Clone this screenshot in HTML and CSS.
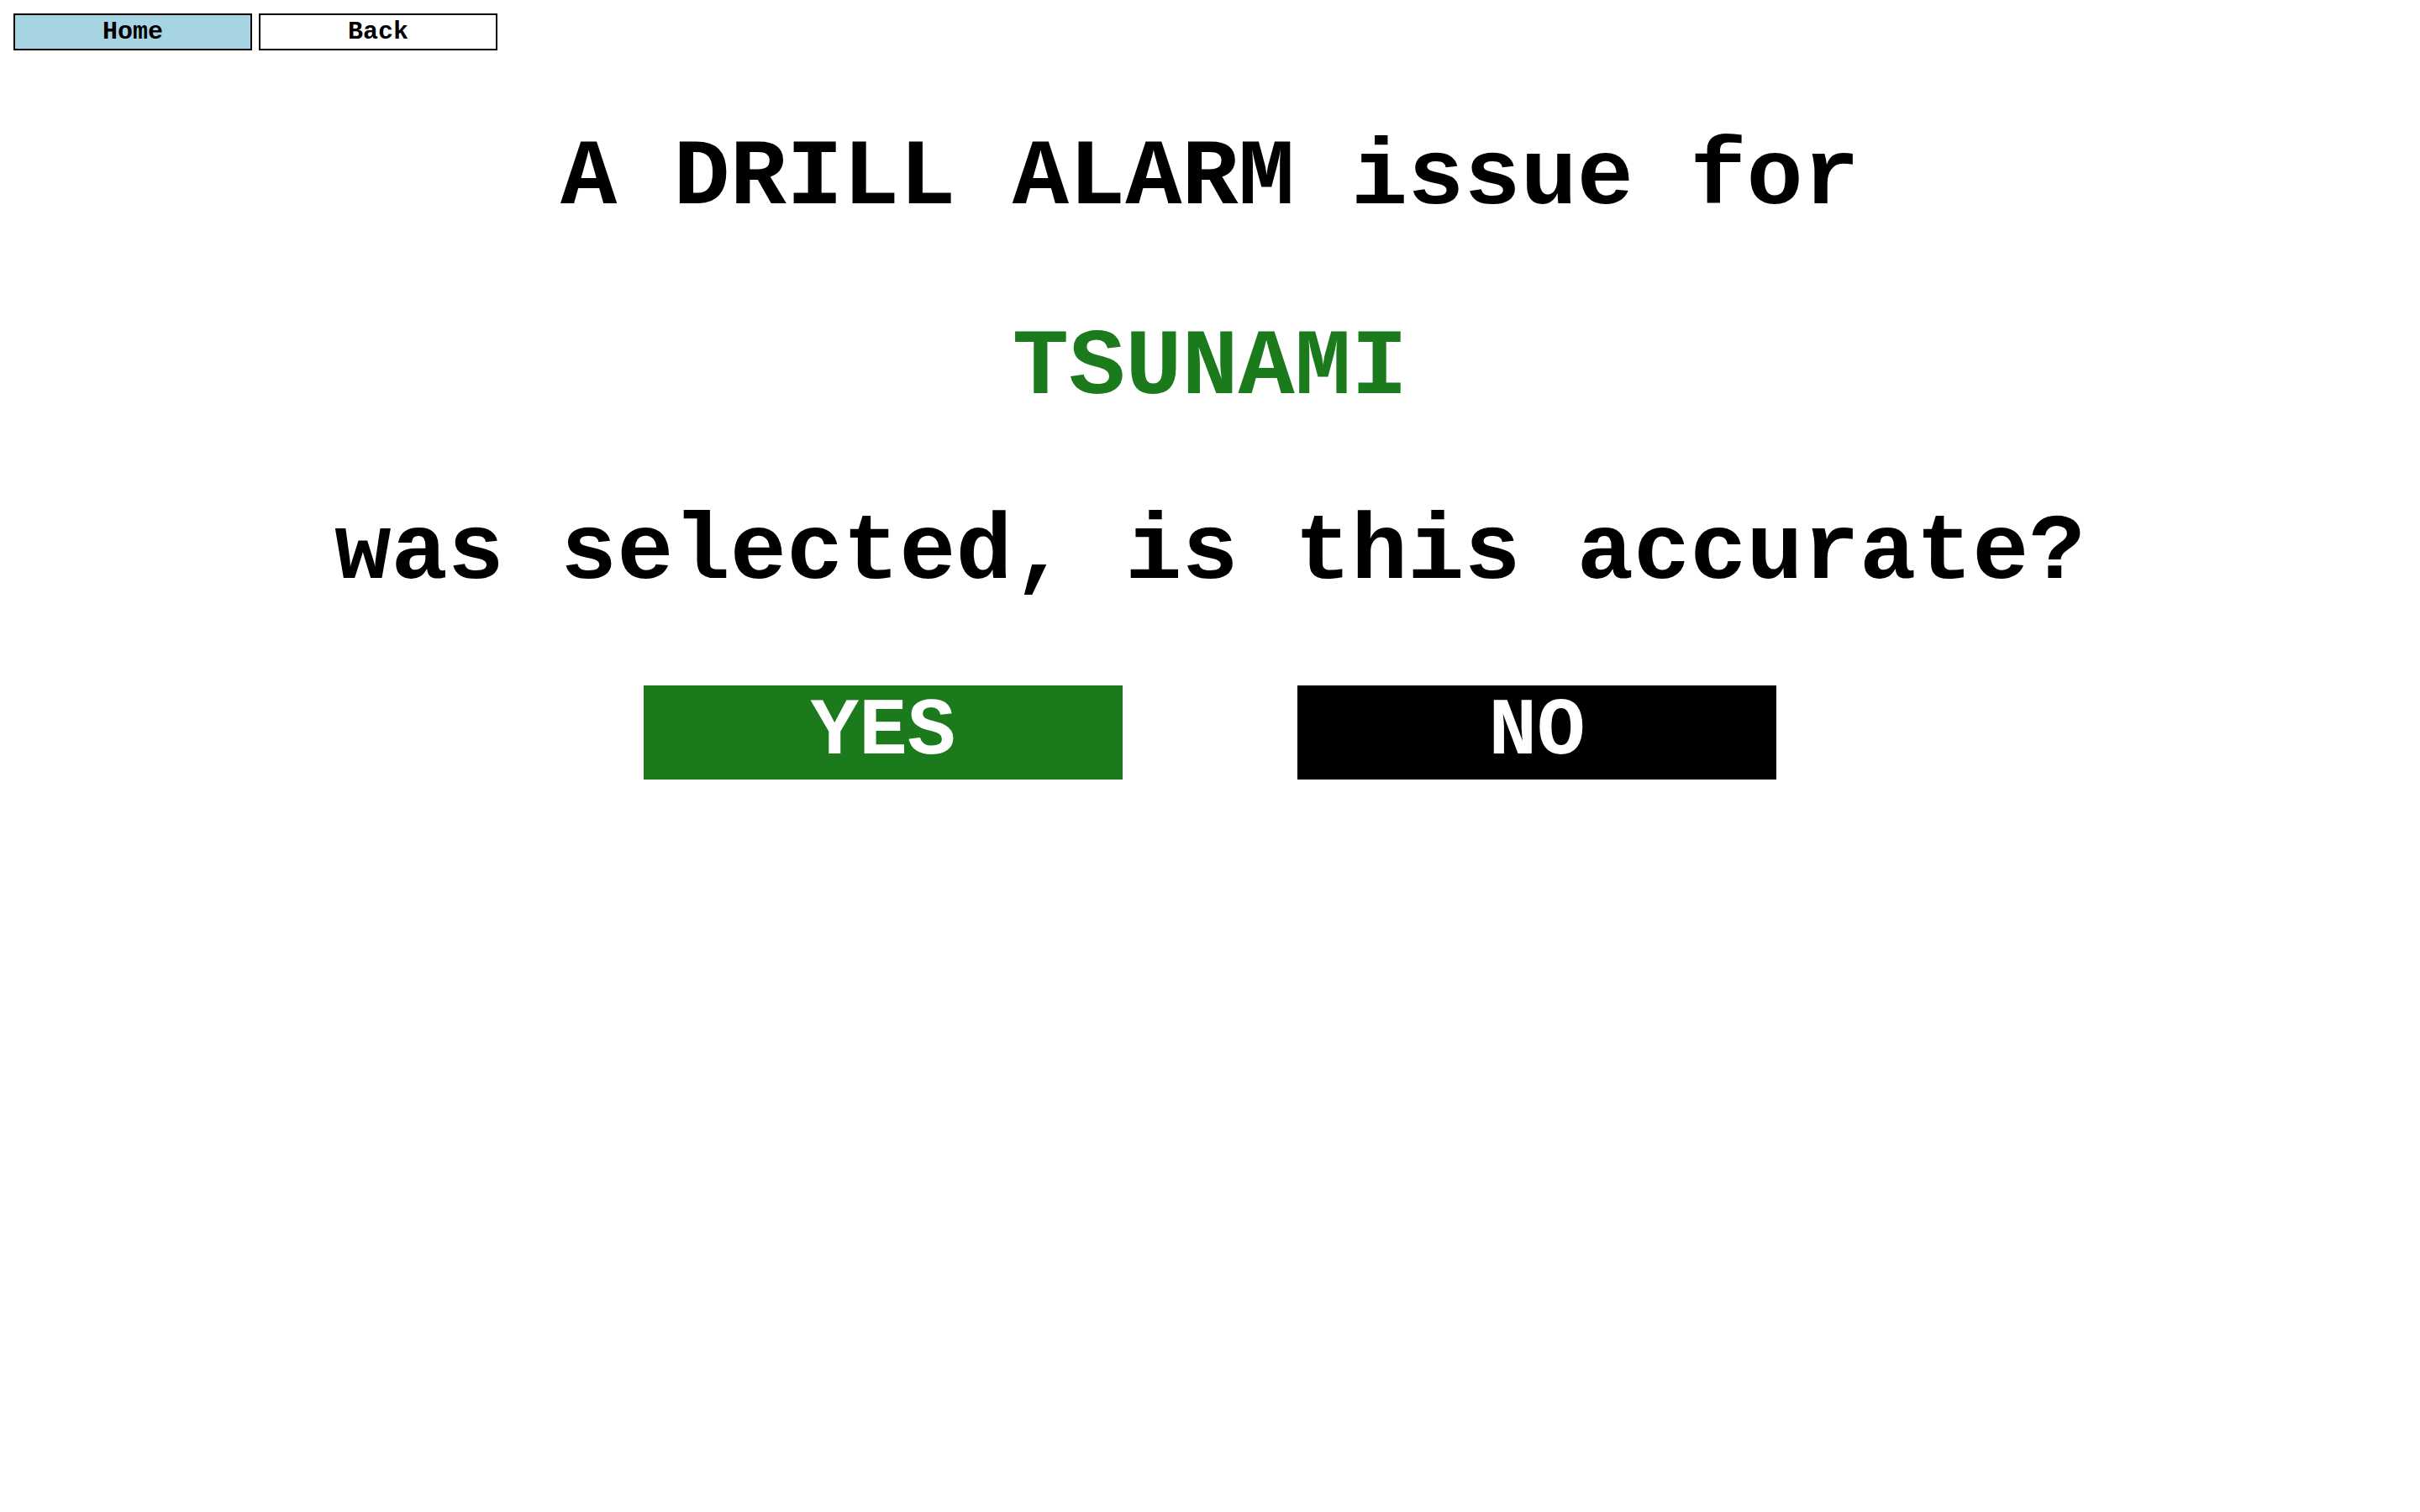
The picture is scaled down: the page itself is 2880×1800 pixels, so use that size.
FILE: index.html
```html
<!DOCTYPE html>
<html lang="en">
<head>
<meta charset="utf-8">
<title>Drill Alarm Confirmation</title>
<link rel="stylesheet" href="styles.css">
</head>
<body>
<nav class="nav">
  <button class="nav-btn nav-home">Home</button>
  <button class="nav-btn nav-back">Back</button>
</nav>
<main class="confirm">
  <div class="line">A DRILL ALARM issue for</div>
  <div class="line subject">TSUNAMI</div>
  <div class="line">was selected, is this accurate?</div>
  <div class="choices">
    <button class="choice choice-yes">YES</button>
    <button class="choice choice-no">NO</button>
  </div>
</main>
</body>
</html>
```

FILE: styles.css
```css
html, body {
  margin: 0;
  padding: 0;
  background: #ffffff;
}

body {
  font-family: "Courier New", "Nimbus Mono PS", "Nimbus Mono L", FreeMono, "Liberation Mono", monospace;
  font-weight: bold;
  color: #000000;
}

.nav {
  display: flex;
  gap: 8px;
  padding: 16px 16px 0;
}

.nav-btn {
  box-sizing: border-box;
  width: 284px;
  height: 44px;
  border: 2px solid #000000;
  border-radius: 0;
  padding: 0;
  margin: 0;
  font-family: "Courier New", "Nimbus Mono PS", "Nimbus Mono L", FreeMono, "Liberation Mono", monospace;
  font-weight: bold;
  font-size: 30px;
  line-height: 40px;
  color: #000000;
  text-align: center;
}

.nav-home {
  background: #a7d4e2;
}

.nav-back {
  background: #ffffff;
}

.confirm {
  display: flex;
  flex-direction: column;
  align-items: center;
  margin-top: 89px;
}

.line {
  font-size: 112px;
  line-height: 127px;
  text-align: center;
  white-space: nowrap;
}

.subject {
  color: #1a7a1c;
  margin: 99px 0 93px;
}

.choices {
  display: flex;
  gap: 208px;
  margin-top: 94px;
}

.choice {
  box-sizing: border-box;
  width: 570px;
  height: 112px;
  border: none;
  border-radius: 0;
  padding: 0;
  margin: 0;
  font-family: "Courier New", "Nimbus Mono PS", "Nimbus Mono L", FreeMono, "Liberation Mono", monospace;
  font-weight: bold;
  font-size: 96px;
  line-height: 112px;
  color: #ffffff;
  text-align: center;
}

.choice-yes {
  background: #1a7a1c;
}

.choice-no {
  background: #000000;
}
```
